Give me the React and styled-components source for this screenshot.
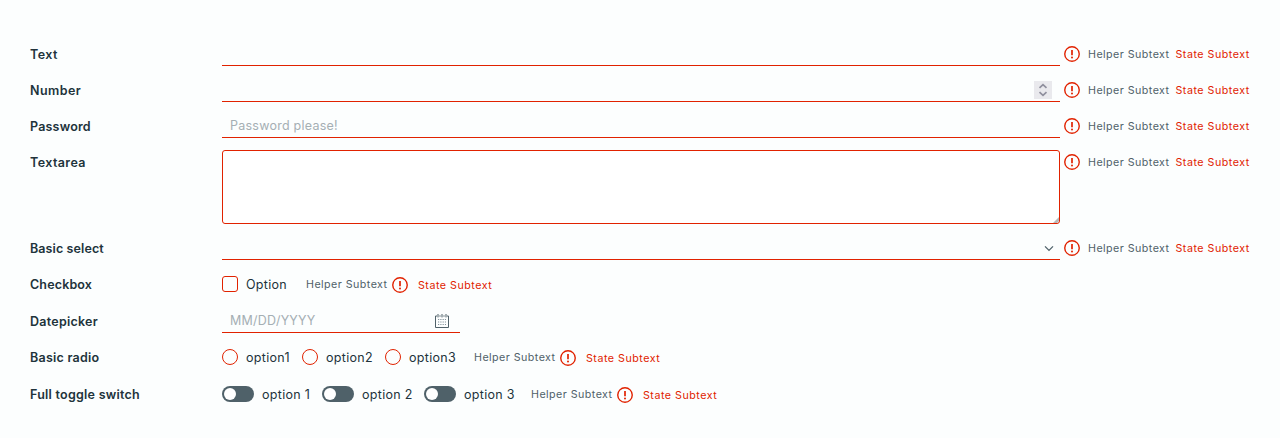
import React from "react";
import styled, { createGlobalStyle } from "styled-components";

const RED = "#e12200";

const GlobalStyle = createGlobalStyle`
  * { box-sizing: border-box; }
  body {
    margin: 0;
    background: #fcfefe;
    color: #21333b;
    font: 400 12.5px/24px Inter, "Liberation Sans", sans-serif;
  }
`;

const Form = styled.form`
  display: flex;
  flex-direction: column;
  gap: 12px;
  height: 438px;
  padding: 42px 0 0 30px;
`;

const Row = styled.div`
  display: flex;
  align-items: flex-start;
  height: ${(p) => p.$height || 24}px;
`;

const Label = styled.label`
  flex: 0 0 192px;
  padding-top: 1px;
  font-weight: 600;
  letter-spacing: ${(p) => (p.$track === undefined ? 0.25 : p.$track)}px;
  white-space: nowrap;
`;

const Field = styled.div`
  display: flex;
  align-items: center;
  justify-content: space-between;
  width: ${(p) => p.$width || 838}px;
  height: 24px;
  padding: 0 ${(p) => p.$end || 8}px 0 8px;
  border-bottom: 1px solid ${RED};
`;

const Input = styled.input`
  flex: 1;
  min-width: 0;
  height: 23px;
  padding: ${(p) => p.$drop || 0}px 0 0;
  border: 0;
  outline: 0;
  background: transparent;
  color: inherit;
  font: inherit;
  letter-spacing: 0.25px;
  &::placeholder { color: #a5afb4; opacity: 1; }
`;

const AreaFrame = styled.div`
  position: relative;
  width: 838px;
  height: 74px;
`;

const Area = styled.textarea`
  display: block;
  width: 100%;
  height: 100%;
  padding: 4px 8px;
  border: 1px solid ${RED};
  border-radius: 3px;
  outline: 0;
  resize: none;
  background: #fff;
  font: inherit;
`;

const Grip = styled.svg`
  position: absolute;
  right: 1px;
  bottom: 1px;
`;

const Stepper = styled.span`
  display: flex;
  width: 18px;
  height: 18px;
  margin-top: 1px;
  background: #e9e9ed;
`;

const SideNote = styled.div`
  display: flex;
  align-items: center;
  height: 24px;
  margin-left: 4px;
`;

const InlineNote = styled(SideNote)`
  margin-left: 0;
`;

const Helper = styled.span`
  width: ${(p) => (p.$inline ? 86 : 87.5)}px;
  margin-left: ${(p) => (p.$inline ? 0 : 8)}px;
  padding-top: 2px;
  color: #4f6169;
  font-size: 10.7px;
  letter-spacing: 0.45px;
  white-space: nowrap;
`;

const StateText = styled.span`
  margin-left: ${(p) => (p.$inline ? 10 : 0)}px;
  padding-top: ${(p) => (p.$inline ? 3 : 2)}px;
  color: ${RED};
  font-size: 10.7px;
  letter-spacing: 0.5px;
  white-space: nowrap;
`;

const AlertSvg = styled.svg`
  flex: none;
  margin-top: ${(p) => (p.$inline ? 2 : 0)}px;
`;

const Choice = styled.label`
  display: flex;
  align-items: center;
  gap: 8px;
  width: ${(p) => p.$width}px;
  height: 24px;
  letter-spacing: 0.3px;
  white-space: nowrap;
`;

const ChoiceText = styled.span`
  padding-top: 2px;
`;

const Box = styled.span`
  flex: none;
  width: 16px;
  height: 16px;
  border: 1px solid ${RED};
  border-radius: ${(p) => (p.$round ? "50%" : "3px")};
`;

const Track = styled.span`
  flex: none;
  display: flex;
  align-items: center;
  width: 32px;
  height: 16px;
  padding: 0 2px;
  border-radius: 8px;
  background: #4f6169;
`;

const Knob = styled.span`
  width: 12px;
  height: 12px;
  border-radius: 50%;
  background: #fff;
`;

function Alert({ inline }) {
  return (
    <AlertSvg $inline={inline} width="16" height="16" viewBox="0 0 16 16">
      <circle cx="8" cy="8" r="7.25" fill="none" stroke={RED} strokeWidth="1.4" />
      <path d="M8 3.9v5.3" stroke={RED} strokeWidth="1.7" />
      <circle cx="8" cy="11.4" r="1" fill={RED} />
    </AlertSvg>
  );
}

function Note() {
  return (
    <SideNote>
      <Alert />
      <Helper>Helper Subtext</Helper>
      <StateText>State Subtext</StateText>
    </SideNote>
  );
}

function ChoiceNote() {
  return (
    <InlineNote>
      <Helper $inline>Helper Subtext</Helper>
      <Alert inline />
      <StateText $inline>State Subtext</StateText>
    </InlineNote>
  );
}

function Option({ width, mark, children }) {
  return (
    <Choice $width={width}>
      {mark === "toggle" ? <Track><Knob /></Track> : <Box $round={mark === "radio"} />}
      <ChoiceText>{children}</ChoiceText>
    </Choice>
  );
}

function Calendar() {
  return (
    <svg width="16" height="16" viewBox="0 0 16 16" fill="none" stroke="#4f6169">
      <path d="M3 3H1.5v11.5h13V3H13M5.3 3h1.4M9.3 3h1.4" />
      <path d="M4 1v3.4M8 1v3.4M12 1v3.4" />
      <path d="M4 6.5h8M4 9h8M4 11.5h8" stroke="#84939b" strokeDasharray="1.2 1.1" />
    </svg>
  );
}

export default function App() {
  return (
    <>
      <GlobalStyle />
      <Form>
        <Row>
          <Label $track={0.45}>Text</Label>
          <Field><Input /></Field>
          <Note />
        </Row>
        <Row>
          <Label $track={0.45}>Number</Label>
          <Field>
            <Input />
            <Stepper>
              <svg width="18" height="18" viewBox="0 0 18 18" fill="none" stroke="#8f8f9d" strokeWidth="1.7">
                <path d="M5.5 6.8L9 3.7l3.5 3.1M5.5 11.2L9 14.3l3.5-3.1" />
              </svg>
            </Stepper>
          </Field>
          <Note />
        </Row>
        <Row>
          <Label $track={0.2}>Password</Label>
          <Field><Input $drop={1} type="password" placeholder="Password please!" /></Field>
          <Note />
        </Row>
        <Row $height={74}>
          <Label $track={0.4}>Textarea</Label>
          <AreaFrame>
            <Area />
            <Grip width="6" height="6" viewBox="0 0 6 6">
              <path d="M0 6L6 0v4L4 6z" fill="#b9b9b9" />
            </Grip>
          </AreaFrame>
          <Note />
        </Row>
        <Row>
          <Label $track={0.1}>Basic select</Label>
          <Field $end={6}>
            <Input />
            <svg width="14" height="14" viewBox="0 0 14 14" fill="none" stroke="#4f6169" strokeWidth="1.3">
              <path d="M5 5.4L9 9.4l4-4" />
            </svg>
          </Field>
          <Note />
        </Row>
        <Row $height={25}>
          <Label $track={0.15}>Checkbox</Label>
          <Option width={84} mark="checkbox">Option</Option>
          <ChoiceNote />
        </Row>
        <Row>
          <Label>Datepicker</Label>
          <Field $width={238} $end={10}>
            <Input $drop={1} placeholder="MM/DD/YYYY" />
            <Calendar />
          </Field>
        </Row>
        <Row $height={25}>
          <Label>Basic radio</Label>
          <Option width={80} mark="radio">option1</Option>
          <Option width={83} mark="radio">option2</Option>
          <Option width={89} mark="radio">option3</Option>
          <ChoiceNote />
        </Row>
        <Row $height={25}>
          <Label>Full toggle switch</Label>
          <Option width={100} mark="toggle">option 1</Option>
          <Option width={102} mark="toggle">option 2</Option>
          <Option width={107} mark="toggle">option 3</Option>
          <ChoiceNote />
        </Row>
      </Form>
    </>
  );
}
